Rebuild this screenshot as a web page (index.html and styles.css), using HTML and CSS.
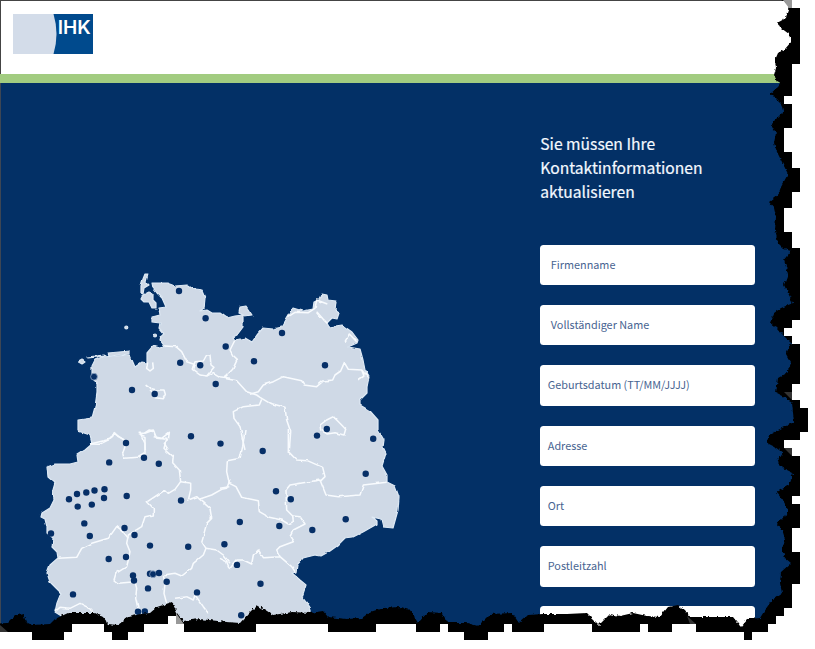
FILE: index.html
```html
<!DOCTYPE html>
<html lang="de">
<head>
<meta charset="utf-8">
<title>IHK</title>
<link rel="stylesheet" href="styles.css">
</head>
<body>
<div class="page">
  <header class="header">
    <svg class="logo" viewBox="0 0 80 40" role="img" aria-label="IHK">
      <rect width="80" height="40" fill="#004a8d"/>
      <path d="M0 0H40.500Q46.500 20 40.500 40H0Z" fill="#d3dce9"/>
      <text class="logo-text" x="44.800" y="20.300" textLength="33" lengthAdjust="spacingAndGlyphs">IHK</text>
    </svg>
  </header>
  <main class="content">
    <svg class="map" viewBox="0 83 520 566" aria-hidden="true">
      <defs>
        <filter id="coast" x="-5%" y="-5%" width="110%" height="110%" color-interpolation-filters="sRGB">
          <feTurbulence type="fractalNoise" baseFrequency=".14" numOctaves="1" seed="4"/>
          <feDisplacementMap in="SourceGraphic" scale="3" xChannelSelector="R" yChannelSelector="G"/>
          <feGaussianBlur stdDeviation=".3"/>
        </filter>
      </defs>
      <g filter="url(#coast)">
        <g class="land">
          <path d="M152 283 167 283 175 286 187 285 195 290 202 291 205 298 204 308 200 311 207 310 212 313 220 313 227 318 235 316 243 315 243 327 237 335 233 337 235 340 245 338 252 342 257 335 263 328 273 329 282 327 287 318 293 308 303 311 313 309 314 302 319 300 322 294 327 295 328 300 336 301 335 310 339 313 337 319 332 318 327 323 329 327 342 325 352 332 358 340 357 343 348 347 360 349 363 360 365 370 369 377 367 387 367 393 360 400 360 405 370 411 378 420 378 430 384 440 383 447 386 453 382 466 387 475 387 482 395 486 399 497 398 510 393 528 383 527 381 519 372 517 377 521 377 524 363 532 353 537 345 538 337 546 330 551 321 556 315 555 303 558 297 565 296 572 292 573 300 580 306 585 302 597 306 602 311 610 311 640 63 640 63 617 55 612 57 603 61 593 56 588 50 582 47 573 50 565 58 558 57 552 52 547 53 538 47 533 47 527 45 519 41 517 42 513 50 508 54 500 53 490 55 483 48 477 47 467 55 464 70 464 78 462 77 455 85 450 92 444 90 435 78 431 78 420 92 418 95 407 97 393 97 382 92 377 92 366 95 360 102 357 130 355 132 360 135 367 142 362 147 363 147 353 153 346 160 348 165 347 160 340 161 336 164 334 159 328 160 323 152 322 152 317 160 315 159 308 166 307 162 298 157 293 153 288Z"/>
          <path d="M240 307 246 306 252 315 245 316 239 313Z"/>
          <path d="M145 274 148 274 146 282 149 285 144 288 143 294 141 293 141 286 143 279Z"/>
          <path d="M143 295 149 292 153 294 153 300 156 303 156 308 152 308 149 302 144 302 141 299Z"/>
          <circle cx="126.300" cy="327.500" r="1.500"/>
          <circle cx="155" cy="335.500" r="1.500"/>
          <path d="M78.500 362 82 360 85 362 82 364ZM87 357 104 355 106 356 88 358ZM108 353 130 351 130 354 109 356Z"/>
        </g>
        <g class="border" transform="translate(40 260) scale(.333333)">
          <path d="M375 258 408 260 425 275 440 305 462 313 457 328 480 345 500 348 520 338 540 350 570 355"/>
          <path d="M457 328 465 305 490 303 500 285 510 285 513 315 522 322 500 348"/>
          <path d="M323 307 320 325 330 333 340 325 338 307M317 375 330 385 350 390 372 390 376 403 370 416 345 413 340 400 317 375"/>
          <path d="M150 552 178 553 215 535 223 518 235 530 250 538 256 555M296 520 315 530 315 555 316 570M296 520 312 520 328 510 340 512 342 530 365 535 388 517 385 540 373 550 385 570"/>
        </g>
        <g class="border" transform="translate(220 260) scale(.333333)">
          <path d="M45 240 30 270 38 285 52 298 38 328 12 355 50 362 80 395 110 405 120 412 150 430 195 442 200 480 212 515 208 570"/>
          <path d="M90 403 115 395 130 375 160 365 190 350 245 362 252 375 290 380 310 363 338 360 345 345 362 333 373 308 385 328 425 330 432 348 415 360M425 330 445 355"/>
          <path d="M125 418 118 435 70 440 40 455 42 475 60 500 68 540 75 570"/>
          <path d="M300 495 320 480 340 470 362 492 377 508 372 525 345 518 322 522 302 510 300 495M205 170 225 157 265 158 285 145 290 120 322 132M375 245 388 222 410 245M290 155 310 178 322 190"/>
        </g>
        <g class="border" transform="translate(30 430) scale(.333333)">
          <path d="M180 42 240 28 252 10 280 28 288 42 278 70 282 85 325 82 345 70 345 40 332 12M345 10 370 0 380 25 410 28 402 55 430 80 428 98 448 120 452 155 435 178 415 190 405 180 352 215 370 235 370 255 345 260 335 290 295 315 290 340 300 365 295 390 290 410 258 430 252 450 265 460 315 455 320 475 317 505 325 540"/>
          <path d="M452 155 482 160 482 180 475 210 500 200 540 235 545 265 530 280 522 310 515 335 528 355 520 375 490 400 485 415 455 438 435 430 400 435 405 460 402 490 410 520"/>
          <path d="M510 207 545 195 575 178 590 175 600 150M528 355 560 360 580 375 600 400"/>
          <path d="M85 385 140 382 155 355 185 340 235 325 260 290 275 300 295 325M75 545 90 532 120 535 150 520 185 538 190 560M435 505 470 500 490 510 495 495 520 530 535 550"/>
        </g>
        <g class="border" transform="translate(220 430) scale(.333333)">
          <path d="M75 0 68 50 60 85 22 92 20 125 28 160 48 170 65 202 115 212 118 245 148 262 185 270 205 282 220 275 218 258 200 240 198 180 210 165 250 158 300 150 318 195 355 200 420 195 430 165 500 157"/>
          <path d="M205 0 205 65 230 90 262 92 308 112 315 140 300 155M0 175 28 170M218 258 240 260 255 282 220 300 210 320 220 335 180 350 170 360 180 380 215 410 225 425M180 380 130 383 115 360 100 375 95 402 70 390 48 390 28 415 20 395 0 385"/>
        </g>
      </g>
      <g class="pins">
        <circle cx="179" cy="291" r="3.200"/><circle cx="205.600" cy="318.300" r="3.200"/><circle cx="225.700" cy="346.500" r="3.200"/><circle cx="180.200" cy="362.700" r="3.200"/><circle cx="200.200" cy="365.300" r="3.200"/><circle cx="215.700" cy="384" r="3.200"/>
        <circle class="ring" cx="94" cy="376.700" r="3.400"/><circle cx="132" cy="390" r="3.200"/><circle cx="154.700" cy="394" r="3.200"/><circle cx="191" cy="436.300" r="3.200"/><circle cx="220.500" cy="443.600" r="3.200"/><circle cx="126" cy="443" r="3.200"/>
        <circle cx="282" cy="333" r="3.200"/><circle cx="254" cy="361.200" r="3.200"/><circle cx="325" cy="365.300" r="3.200"/><circle cx="326.800" cy="429" r="3.200"/><circle cx="317" cy="435.600" r="3.200"/><circle cx="373.200" cy="438.800" r="3.200"/><circle cx="262.700" cy="451" r="3.200"/><circle cx="365.700" cy="473.800" r="3.200"/>
        <circle cx="109.200" cy="462.400" r="3.200"/><circle cx="144" cy="457.800" r="3.200"/><circle cx="158.800" cy="463.700" r="3.200"/><circle cx="69" cy="499.300" r="3.200"/><circle cx="77" cy="494" r="3.200"/><circle cx="86.300" cy="492.500" r="3.200"/><circle cx="94.500" cy="490.500" r="3.200"/><circle cx="104.500" cy="489.200" r="3.200"/><circle cx="104" cy="498" r="3.200"/><circle cx="77.700" cy="506.600" r="3.200"/><circle cx="91.800" cy="504.600" r="3.200"/><circle cx="126.700" cy="496" r="3.200"/><circle cx="181" cy="500.500" r="3.200"/>
        <circle cx="84.300" cy="523.400" r="3.200"/><circle cx="51" cy="533.500" r="3.200"/><circle cx="89.800" cy="536" r="3.200"/><circle cx="124.500" cy="528" r="3.200"/><circle cx="134.500" cy="535" r="3.200"/><circle cx="150" cy="545.600" r="3.200"/><circle cx="188.200" cy="546.800" r="3.200"/><circle cx="108.700" cy="559" r="3.200"/><circle cx="126" cy="557" r="3.200"/><circle cx="133" cy="575.500" r="3.200"/><circle cx="134" cy="580.500" r="3.200"/><circle cx="150" cy="573.800" r="3.200"/><circle class="ring" cx="153" cy="574.200" r="3.400"/><circle cx="159" cy="573" r="3.200"/><circle cx="166.700" cy="581.700" r="3.200"/><circle cx="148" cy="588.400" r="3.200"/><circle cx="197" cy="592.400" r="3.200"/><circle cx="73" cy="594.400" r="3.200"/><circle cx="138" cy="611.700" r="3.200"/><circle cx="144.800" cy="611.500" r="3.200"/>
        <circle cx="276" cy="491.200" r="3.200"/><circle cx="290.800" cy="499.300" r="3.200"/><circle cx="239.800" cy="522" r="3.200"/><circle cx="279.300" cy="526" r="3.200"/><circle cx="312.300" cy="530" r="3.200"/><circle cx="345.700" cy="519.300" r="3.200"/><circle cx="224.400" cy="544.300" r="3.200"/><circle cx="237" cy="564.900" r="3.200"/><circle cx="260.500" cy="583.700" r="3.200"/><circle cx="241.200" cy="615.200" r="3.200"/>
      </g>
    </svg>
    <form class="form">
      <h1 class="title">Sie müssen Ihre Kontaktinformationen aktualisieren</h1>
      <div class="fields">
        <label class="field field--wide">Firmenname</label>
        <label class="field field--wide">Vollständiger Name</label>
        <label class="field">Geburtsdatum (TT/MM/JJJJ)</label>
        <label class="field">Adresse</label>
        <label class="field">Ort</label>
        <label class="field">Postleitzahl</label>
        <label class="field"></label>
      </div>
    </form>
  </main>
  <svg class="torn" viewBox="0 0 815 649" aria-hidden="true">
    <defs>
      <filter id="rough" filterUnits="userSpaceOnUse" x="-10" y="-10" width="840" height="670" color-interpolation-filters="sRGB">
        <feTurbulence type="fractalNoise" baseFrequency=".28" numOctaves="2" seed="9"/>
        <feDisplacementMap in="SourceGraphic" scale="4" xChannelSelector="R" yChannelSelector="G"/>
      </filter>
    </defs>
    <path filter="url(#rough)" class="shadow" d="M781 -9 781 0 787 3 789 7 787 13 786 18 777 23 781 28 789 34 791 42 785 49 778 53 775 60 776 68 774 75 777 81 781 83 778 87 770 94 775 97 781 103 783 112 774 121 772 126 776 133 774 143 777 152 781 160 788 174 781 187 778 195 769 202 774 208 776 217 775 230 778 243 784 249 791 251 784 260 786 267 788 274 784 285 788 293 793 303 781 308 774 313 770 323 777 328 782 334 791 343 786 354 791 363 787 373 778 378 776 393 784 397 792 403 794 422 778 430 769 435 767 443 775 447 783 453 777 462 783 468 793 473 789 485 777 492 782 498 788 510 785 517 776 523 782 530 785 540 782 550 785 558 791 563 781 572 780 583 782 593 772 600 765 610 760 618 748 619 741 627 733 617 717 617 690 617 685 610 678 605 668 607 660 617 647 616 633 613 620 616 610 614 599 625 587 613 567 614 543 614 528 615 519 623 512 613 490 614 478 626 467 623 448 623 442 613 428 612 418 623 410 610 400 607 383 608 370 612 362 618 347 619 328 617 323 611 310 613 293 612 273 615 267 611 257 605 248 614 240 623 227 622 200 619 183 621 177 613 172 602 157 607 150 613 140 614 128 617 118 625 108 624 103 617 95 613 68 613 55 619 50 624 32 625 26 622 23 614 15 616 8 623 -9 624V660H830V-9Z"/>
    <path fill="#333" d="M0 625 8 632H0ZM784 448H792V456ZM784 392H792V400ZM687 616 696 624H690Z"/>
    <path fill="#999" d="M783 0H792V8H789ZM176 613 184 624H176Z"/>
    <path fill="#fff" d="M815 0H792V8H800V64H792V96H784V104H792V128H784V152H792V168H800V192H792V208H784V232H792V248H800V320H792V328H784V336H792V344H800V384H792V400H800V408H808V432H800V440H784V448H792V456H800V496H792V504H800V528H792V552H800V584H792V608H784V616H776V624H768V632H752V640H744V632H696V624H672V632H648V624H640V632H592V624H544V632H512V624H504V632H488V640H464V632H448V624H440V632H416V624H376V632H328V624H256V632H184V624H176V616H168V624H144V632H128V640H112V632H104V624H72V632H64V640H32V632H0V649H815Z"/>
  </svg>
</div>
</body>
</html>
```
FILE: styles.css
```css
* { box-sizing: border-box; }

body {
  margin: 0;
  background: #fff;
  font-family: "Noto Sans CJK SC", "Noto Sans", sans-serif;
}

.page {
  position: relative;
  width: 815px;
  height: 649px;
  overflow: hidden;
  display: flex;
  flex-direction: column;
}

.header {
  flex: none;
  height: 83px;
  padding: 13px 0 0 12px;
  background: #fff;
  border-top: 1px solid #444;
  border-bottom: 9px solid #a2cc80;
  box-shadow: inset 1px 0 #444;
  padding-left: 13px;
}

.logo { display: block; width: 80px; height: 40px; }

.logo-text {
  fill: #fff;
  font: 600 18.700px Inter, "Liberation Sans", sans-serif;
}

.content {
  flex: 1;
  display: flex;
  background: #033066;
  box-shadow: inset 1px 0 #3d4654;
}

.map { flex: none; width: 520px; height: 566px; }

.land {
  fill: #cfd9e6;
  stroke: #dfeaf5;
  stroke-width: 1.2;
  stroke-linejoin: round;
}

.border {
  fill: none;
  stroke: #f8fbfe;
  stroke-width: 4.6;
  stroke-linejoin: round;
}

.pins { fill: #062f67; }
.ring { stroke: #8fa6c4; stroke-width: .8; }

.form { width: 216px; margin: 48.500px 0 0 20.300px; }

.title {
  margin: 0;
  color: #f4f9ff;
  font-size: 15.650px;
  font-weight: 400;
  line-height: 24.200px;
  -webkit-text-stroke: .2px #f4f9ff;
}

.fields {
  display: flex;
  flex-direction: column;
  gap: 19.800px;
  margin-top: 40.500px;
}

.field {
  display: flex;
  align-items: center;
  flex: none;
  height: 40.500px;
  padding: 0 0 2.500px 7.500px;
  border-radius: 3.500px;
  background: #fff;
  color: #486491;
  font-size: 10.850px;
  line-height: 16px;
  width: 215px;
}

.field--wide { padding-left: 10.500px; }

.torn {
  position: absolute;
  top: 0;
  left: 0;
  width: 815px;
  height: 649px;
}

.shadow { fill: #000; }
```
